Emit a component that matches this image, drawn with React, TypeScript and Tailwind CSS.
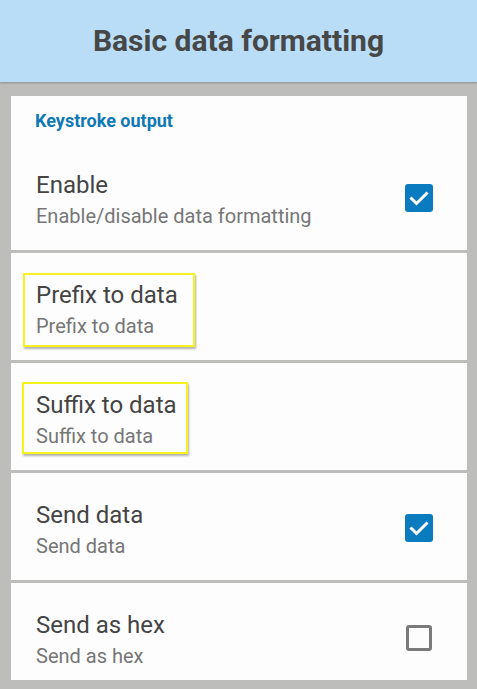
import React from "react";

type Row = {
  id: string;
  title: string;
  summary: string;
  checked?: boolean;
  highlight?: string;
  size?: string;
};

const rows: Row[] = [
  { id: "prefix", title: "Prefix to data", summary: "Prefix to data", highlight: "left-[12px] top-[20px] w-[172px] h-[74px]" },
  { id: "suffix", title: "Suffix to data", summary: "Suffix to data", highlight: "left-[11px] top-[19px] w-[166px] h-[72px]" },
  { id: "send", title: "Send data", summary: "Send data", checked: true },
  { id: "hex", title: "Send as hex", summary: "Send as hex", checked: false, size: "h-[97px] pt-[18px]" },
];

function CheckBox({ checked }: { checked: boolean }) {
  return (
    <div className="w-[28px] h-[28px] flex items-center justify-center mb-[5px]">
      {checked ? (
        <div className="w-[28px] h-[28px] rounded-[3px] bg-[#0b7bbf] flex items-center justify-center">
          <svg width="28" height="28" viewBox="0 0 28 28">
            <path d="M6.5 14.5 L11.5 19.5 L21.5 9.5" fill="none" stroke="#ffffff" strokeWidth="3" strokeLinecap="square" />
          </svg>
        </div>
      ) : (
        <div className="w-[26px] h-[26px] rounded-[3px] border-[3px] border-[#7a7a7a]" />
      )}
    </div>
  );
}

function PrefRow({ row }: { row: Row }) {
  return (
    <div className={`relative bg-[#fdfdfd] flex items-center pl-[25px] pr-[34px] ${row.size ?? "h-[107px] pt-[8px]"}`}>
      <div className="flex-1">
        <div className="text-[24px] leading-[28px] text-[#444444]">{row.title}</div>
        <div className="text-[20px] leading-[28px] mt-[3px] text-[#767676]">{row.summary}</div>
      </div>
      {row.checked !== undefined && <CheckBox checked={row.checked} />}
      {row.highlight && (
        <div className={`absolute border-2 border-[#f5f21e] shadow-[1px_2px_2px_rgba(0,0,0,0.3)] ${row.highlight}`} />
      )}
    </div>
  );
}

export default function App() {
  return (
    <div className="w-[477px] h-[689px] overflow-hidden bg-[#bdbebc] font-['Roboto',sans-serif]">
      <div className="h-[82px] bg-[#b9ddf7] flex items-center justify-center shadow-[0_1px_2px_rgba(0,0,0,0.25)] relative">
        <h1 className="text-[30px] font-bold text-[#474747] pb-[2px]">Basic data formatting</h1>
      </div>
      <div className="pl-[11px] pr-[10px] pt-[14px] flex flex-col gap-[3px]">
        <div className="bg-[#fdfdfd]">
          <div className="h-[47px] pl-[24px] pt-[15px] text-[18px] leading-[20px] font-bold text-[#0f79b5]">
            Keystroke output
          </div>
          <PrefRow row={{ id: "enable", title: "Enable", summary: "Enable/disable data formatting", checked: true }} />
        </div>
        {rows.map((r) => (
          <PrefRow key={r.id} row={r} />
        ))}
      </div>
    </div>
  );
}
